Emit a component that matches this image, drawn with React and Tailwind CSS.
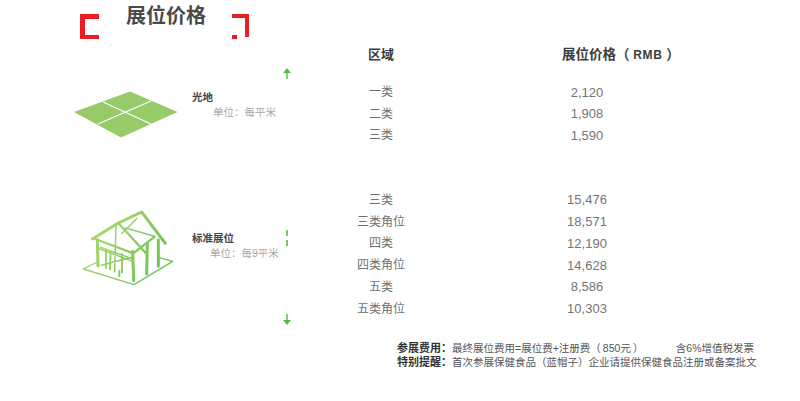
const FONT = "font-['Liberation_Sans','Noto_Sans_CJK_SC',sans-serif]";

const GROUP_ONE = [
  ["一类", "2,120"],
  ["二类", "1,908"],
  ["三类", "1,590"],
];

const GROUP_TWO = [
  ["三类", "15,476"],
  ["三类角位", "18,571"],
  ["四类", "12,190"],
  ["四类角位", "14,628"],
  ["五类", "8,586"],
  ["五类角位", "10,303"],
];

const Arrow = ({ down }) => (
  <svg width="10" height="11" viewBox="0 0 10 11" className={down ? "rotate-180" : ""}>
    <path d="M5 0 L9 5 L1 5 Z" fill="#5bb947" />
    <rect x="4.3" y="4" width="1.4" height="7" fill="#5bb947" />
  </svg>
);

const Grass = () => (
  <svg width="104" height="47" viewBox="74 91 104 47">
    <path d="M74 112 L130 91.5 L177.5 112 L121 137.5 Z" fill="#97ca68" />
    <path d="M103 102 L151 124 M98 124 L151 101" stroke="#ffffff" strokeWidth="1.3" fill="none" />
  </svg>
);

const House = () => (
  <svg width="100" height="80" viewBox="60 40 300 240">
    <defs>
      <linearGradient id="houseGreen" gradientUnits="userSpaceOnUse" x1="70" y1="60" x2="340" y2="260">
        <stop offset="0" stopColor="#b8dc78" />
        <stop offset="1" stopColor="#62bd4c" />
      </linearGradient>
    </defs>
    <g fill="none" stroke="url(#houseGreen)" strokeLinecap="round" strokeLinejoin="round">
      <path d="M70 223 L112 202 M222 270 L70 223 M222 270 L338 200 L296 188" strokeWidth="4" />
      <path d="M97 133 L175 85 L245 52 L316 146" strokeWidth="9" />
      <path d="M175 85 L258 176 M106 133 L220 176 L284 126" strokeWidth="7" />
      <path d="M112 135 L114 214 M218 170 L221 258 M262 145 L260 238 M295 135 L295 215" strokeWidth="9" />
      <path d="M168 92 L164 232 M122 158 L216 192 M124 212 L216 188 M196 100 L282 124 M230 72 L186 116 M112 160 L218 200" strokeWidth="4.5" />
      <path d="M138 165 L138 220 M186 178 L186 234 M152 172 L150 224 M178 228 L178 245" strokeWidth="5.5" />
    </g>
  </svg>
);

const Booth = ({ art, name, unit, left, gap, indent, className }) => (
  <div className={`flex ${left} ${className}`}>
    {art}
    <div className={`${gap} whitespace-nowrap`}>
      <div className="text-[10.5px] leading-[14px] font-bold text-[#444444]">{name}</div>
      <div className={`${indent} text-[10.5px] leading-[14px] text-[#a8a8a8]`}>{unit}</div>
    </div>
  </div>
);

const Rows = ({ rows, rowClass }) => (
  <div>
    {rows.map(([area, price]) => (
      <div key={area + price} className={`grid grid-cols-[100px_312px] items-center ${rowClass}`}>
        <span className="text-center text-[12px] text-[#707070]">{area}</span>
        <span className="text-center text-[13px] text-[#757575]">{price}</span>
      </div>
    ))}
  </div>
);

export default function App() {
  return (
    <div className={`flex w-[800px] h-[401px] overflow-hidden bg-white ${FONT}`}>
      <div className="w-[281px] shrink-0">
        <div className="flex items-start pl-[80px] pt-[6px]">
          <div className="mt-[8px] w-[19px] h-[25px] border-l-[5px] border-t-[5px] border-b-[4px] border-[#ed1c24]" />
          <h1 className="ml-[27px] text-[20px] leading-[20px] font-bold text-[#4a4a4a] whitespace-nowrap">
            展位价格
          </h1>
          <div className="relative ml-[26px] mt-[8px] w-[17px] h-[23px] border-t-[4px] border-r-[4px] border-[#ed1c24]">
            <div className="absolute left-0 top-[17px] w-[5px] h-[4px] bg-[#ed1c24]" />
          </div>
        </div>
        <Booth
          art={<Grass />}
          name="光地"
          unit="单位：每平米"
          left="pl-[74px]"
          gap="ml-[14px] -mt-[1px]"
          indent="ml-[21px] mt-[1px]"
          className="mt-[52px]"
        />
        <Booth
          art={<House />}
          name="标准展位"
          unit="单位：每9平米"
          left="pl-[80px]"
          gap="ml-[12px] mt-[23px]"
          indent="ml-[18px] mt-[1px]"
          className="mt-[70px]"
        />
      </div>

      <div className="w-[12px] shrink-0 flex flex-col items-center pt-[68px]">
        <Arrow />
        <div className="mt-[151px] w-[1.5px] h-[6px] bg-[#7cc65e]" />
        <div className="mt-[4px] w-[1.5px] h-[6px] bg-[#7cc65e]" />
        <div className="mt-[68px]">
          <Arrow down />
        </div>
      </div>

      <div className="ml-[38px] pt-[45px]">
        <div className="grid grid-cols-[100px_312px] items-center h-[20px]">
          <span className="text-center text-[13px] font-bold text-[#3c3c3c]">区域</span>
          <span className="ml-[131px] text-[13.5px] font-bold text-[#3c3c3c] whitespace-nowrap">
            展位价格（ <span className="text-[12px] tracking-[0.6px]">RMB</span> ）
          </span>
        </div>
        <div className="mt-[16.5px]">
          <Rows rows={GROUP_ONE} rowClass="h-[21.5px]" />
        </div>
        <div className="mt-[43px]">
          <Rows rows={GROUP_TWO} rowClass="h-[21.8px]" />
        </div>
        <div className="mt-[21px] ml-[66px] w-[360px] whitespace-nowrap text-[10.5px] leading-[14px] text-[#555555]">
          <div className="flex justify-between">
            <span>
              <b className="text-[11px] text-[#333333]">参展费用：</b>最终展位费用=展位费+注册费（&#8201;850元&#8201;）
            </span>
            <span className="mr-[3px]">含6%增值税发票</span>
          </div>
          <div>
            <b className="text-[11px] text-[#333333]">特别提醒：</b>首次参展保健食品（蓝帽子）企业请提供保健食品注册或备案批文
          </div>
        </div>
      </div>
    </div>
  );
}
